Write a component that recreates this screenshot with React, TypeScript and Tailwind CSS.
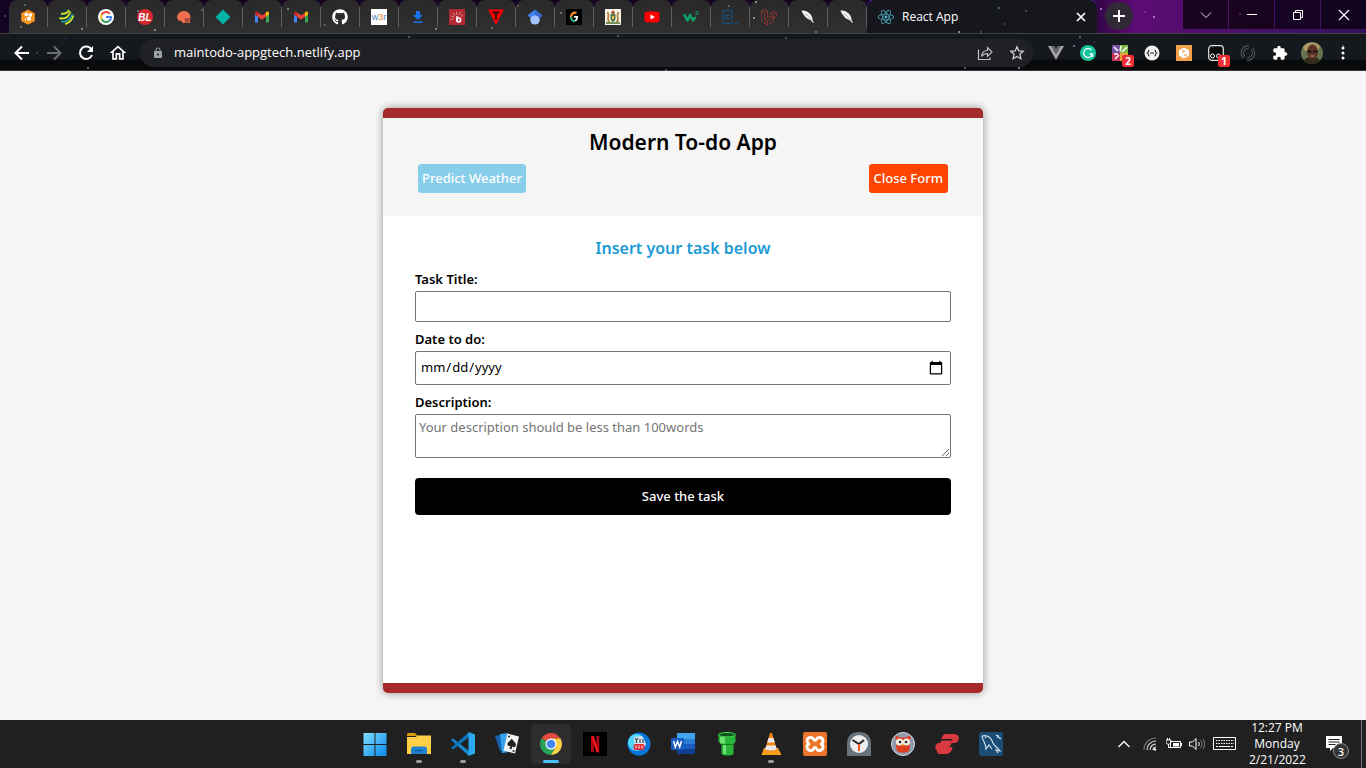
import React from "react";
import { FaGithub, FaLaravel, FaReact } from "react-icons/fa";
import { MdExtension, MdOutlineHome, MdLock } from "react-icons/md";

type IconProps = { children: React.ReactNode; box?: string; className?: string };

function Icon({ children, box = "0 0 16 16", className = "h-4 w-4" }: IconProps) {
  return (
    <svg viewBox={box} className={`${className} shrink-0`} fill="none" aria-hidden="true">
      {children}
    </svg>
  );
}

const gmail = (
  <Icon>
    <path d="M1 4v9.500h3V7z" fill="#4285f4" />
    <path d="M12 7v6.500h3V4z" fill="#34a853" />
    <path d="M4 3.500v4.300l4 3 4-3V3.500l-4 3z" fill="#ea4335" />
    <path d="M12 3.500v4.300l3-2.300V4.200c0-1.400-1.500-2.100-2.500-1.200z" fill="#fbbc04" />
    <path d="M4 3.500v4.300L1 5.500V4.200C1 2.800 2.500 2.100 3.500 3z" fill="#c5221f" />
  </Icon>
);

const feather = (
  <Icon>
    <path d="M1.500 1.500C5 1 9 3 11 6c1.200 2 1.700 4 1.500 5.500L10 11C6 9.500 3 5.500 1.500 1.500z" fill="#f4f4f4" />
    <path d="M5 4.500c2.500 1.500 4.500 4 6 7M4.500 8l.8-1.200" stroke="#777" strokeWidth=".5" />
    <path d="M11 10.500l2.500 3" stroke="#ddd" strokeWidth="1.200" />
  </Icon>
);

const tabs: { name: string; icon: React.ReactNode }[] = [
  {
    name: "Hive",
    icon: (
      <Icon>
        <path d="M8 .5l6.800 3.800v7.600L8 15.700 1.200 11.900V4.300z" fill="#f7921e" />
        <path d="M4.500 4.500l2-1 2 1v2l-2 1-2-1zM9 5l1.500-1L12 5v2l-1.500 1L9 7zM7 8.500l2-1 2 1v2.200L9 12l-2-1.300zM5 9l1 .5V12l-1-.5z" fill="#fff" />
      </Icon>
    ),
  },
  {
    name: "Globe",
    icon: (
      <Icon>
        <circle cx="8" cy="8" r="7.800" fill="#16323a" />
        <path d="M2 4.500c4 1 6 0 8-3.500M.5 9c5 1.500 9-1 11-6.500M6 15c4-1 7-4 8.500-8.500" stroke="#cddb2a" strokeWidth="2" />
        <path d="M2 12.500c5 1 9-2 11.500-7.500" stroke="#2da0a0" strokeWidth="1.600" />
      </Icon>
    ),
  },
  {
    name: "Google",
    icon: (
      <Icon>
        <circle cx="8" cy="8" r="8" fill="#fff" />
        <path d="M11.800 4.800A5 5 0 0 0 3.600 5.700" stroke="#ea4335" strokeWidth="2" />
        <path d="M3.600 5.700a5 5 0 0 0 0 4.600" stroke="#fbbc05" strokeWidth="2" />
        <path d="M3.600 10.300a5 5 0 0 0 7.600 1.600" stroke="#34a853" strokeWidth="2" />
        <path d="M11.200 11.900A5 5 0 0 0 13 8H8" stroke="#4285f4" strokeWidth="2" />
      </Icon>
    ),
  },
  {
    name: "BL",
    icon: (
      <Icon>
        <circle cx="8" cy="8" r="8" fill="#d7282f" />
        <text x="8" y="11.500" textAnchor="middle" fontSize="10" fontWeight="700" fontStyle="italic" fontFamily="Liberation Sans" fill="#fff">BL</text>
      </Icon>
    ),
  },
  {
    name: "Helmet",
    icon: (
      <Icon>
        <path d="M1 9c0-4 3-7 7-7s6.500 3 6.500 6.500l-.5 2v3.500H6.500l-1-2-3-.5z" fill="#f1704f" />
        <path d="M8.500 10h6M10 9v5M12 9v5M8.500 12h5" stroke="#7d3a2c" strokeWidth=".8" />
      </Icon>
    ),
  },
  { name: "Diamond", icon: <Icon><path d="M8 .5L15.500 8 8 15.500.5 8z" fill="#00b3a4" /></Icon> },
  { name: "Mail", icon: gmail },
  { name: "Mail", icon: gmail },
  { name: "GitHub", icon: <FaGithub className="h-4 w-4 text-white" /> },
  {
    name: "w3r",
    icon: (
      <Icon>
        <path d="M0 0h16v16H0z" fill="#fff" />
        <text x="8" y="11" textAnchor="middle" fontSize="9" fontFamily="Liberation Sans" fill="#4d82c4">w<tspan fill="#f58220">3</tspan>r</text>
      </Icon>
    ),
  },
  {
    name: "Downloads",
    icon: <Icon><path d="M6 2h4v4h3L8 11 3 6h3zM3.500 12.500h9V14h-9z" fill="#1a73e8" /></Icon>,
  },
  {
    name: "Bulb",
    icon: (
      <Icon>
        <path d="M0 0h16v16H0z" fill="#b52b35" />
        <path d="M1.500 10.500l3-.5M2 7l3 1.200M4 4l2 2.800M7.500 2.500l.3 3.500M11.500 3L10.200 6M14 6l-2.500 1.800" stroke="#e6a0a0" strokeWidth=".8" />
        <path d="M8 7v5.500" stroke="#fff" strokeWidth="1.500" />
        <circle cx="9.700" cy="11" r="1.900" stroke="#fff" strokeWidth="1.500" />
      </Icon>
    ),
  },
  {
    name: "Triangle",
    icon: <Icon><path d="M0 .5h16L8 16z" fill="#f00" /><path d="M4.500 3.500h7M8 3.500V11" stroke="#2b1010" strokeWidth="1.800" /></Icon>,
  },
  {
    name: "Scholar",
    icon: (
      <Icon>
        <circle cx="8" cy="10.800" r="4.800" fill="#a0c3ff" />
        <path d="M8 .5L.5 6.500 3.500 9a5 5 0 0 1 9 0l3-2.500z" fill="#4285f4" />
        <path d="M8 .5l7.500 6-3 2.500A5 5 0 0 0 8 6z" fill="#3569c9" />
      </Icon>
    ),
  },
  {
    name: "G",
    icon: (
      <Icon>
        <path d="M0 0h16v16H0z" fill="#000" />
        <path d="M10.500 4C7.500 3 5 5 5 8" stroke="#f68b2b" strokeWidth="2.200" />
        <path d="M5 8c0 3 2 4.500 4 4" stroke="#29b78b" strokeWidth="2.200" />
        <path d="M8 7.800h3.200c0 2-.7 3.200-2 3.900" stroke="#fff" strokeWidth="1.800" />
      </Icon>
    ),
  },
  {
    name: "Crest",
    icon: (
      <Icon>
        <path d="M0 0h16v16H0z" fill="#f7f5e9" />
        <path d="M5.500 5h5v5c0 2-2.500 3-2.500 3s-2.500-1-2.500-3z" fill="#54744a" />
        <path d="M8 1.500v3.500M6 3.500h4" stroke="#9c4a2c" strokeWidth="1.500" />
        <path d="M2.500 3l1 3-.5 5 1.500 2M13.500 3l-1 3 .5 5-1.500 2" stroke="#b3803c" strokeWidth="1.800" />
        <path d="M1 14h14" stroke="#779054" strokeWidth="2" />
        <path d="M7 7h2v3H7z" fill="#e2c84a" />
      </Icon>
    ),
  },
  {
    name: "YouTube",
    icon: <Icon><rect x=".5" y="2.500" width="15" height="11" rx="3" fill="#f00" /><path d="M6.500 5.500L11 8l-4.500 2.500z" fill="#fff" /></Icon>,
  },
  {
    name: "W3",
    icon: (
      <Icon>
        <path d="M1 5l3.500 6.500L7 6l3 5.500L12.500 8" stroke="#0d9f65" strokeWidth="2.600" strokeLinejoin="round" />
        <text x="12.300" y="6" fontSize="6" fontWeight="700" fontFamily="Liberation Sans" fill="#0d9f65">3</text>
      </Icon>
    ),
  },
  {
    name: "Code",
    icon: (
      <Icon>
        <rect x="1" y="1.500" width="9" height="13" rx="1" stroke="#174e78" strokeWidth="1.300" />
        <path d="M7.500 6H4v4h3.500M12 14.500h4" stroke="#174e78" strokeWidth="1.500" />
      </Icon>
    ),
  },
  { name: "Laravel", icon: <FaLaravel className="h-4 w-4 text-[#c73b32]" /> },
  { name: "Feather", icon: feather },
  { name: "Feather", icon: feather },
];

const stars: [number, number, string][] = [
  [24, 4, "#5ba1b4"], [4, 15, "#6846d8"], [20, 26, "#999"], [81, 28, "#ccc"], [137, 10, "#999"],
  [154, 29, "#ccc"], [201, 9, "#888"], [287, 8, "#bbb"], [324, 24, "#888"], [435, 28, "#bbb"],
  [491, 27, "#999"], [517, 5, "#a66"], [560, 12, "#aaa"], [728, 5, "#888"], [755, 1, "#ddd"],
  [753, 17, "#ddd"], [815, 31, "#aa8"], [998, 7, "#70a0cc"], [1025, 10, "#a65c6c"], [1004, 23, "#555"],
  [958, 31, "#ddd"], [980, 31, "#667"], [1079, 36, "#99c"], [1100, 8, "#f2c3ff"], [1153, 16, "#f4c6ff"],
  [1144, 11, "#a33bc0"], [1239, 13, "#74389c"], [65, 38, "#335"], [36, 52, "#464"], [87, 67, "#bb9"],
  [408, 36, "#889"], [617, 35, "#888"], [665, 69, "#999"], [785, 37, "#777"], [964, 67, "#88a"],
  [1018, 67, "#bcf"], [1073, 45, "#aaf"], [1093, 41, "#446"], [1342, 45, "#88c"], [1212, 46, "#246"],
];

function Starfield() {
  return (
    <svg className="pointer-events-none absolute left-0 top-0 h-full w-full" aria-hidden="true">
      {stars.map(([x, y, color]) => (
        <rect key={`${x}-${y}`} x={x} y={y} width="2" height="2" fill={color} opacity=".55" />
      ))}
    </svg>
  );
}

function TabStrip() {
  return (
    <div className="flex h-[34px] items-end border-b border-[#414143] bg-linear-to-r from-[#150322] from-78% via-[#5c0b74] via-83% to-[#35125f] pl-[9px]">
      <div className="flex h-full shrink-0 items-end">
        {tabs.map((tab, i) => (
          <button
            key={i}
            aria-label={tab.name}
            className="flex h-[33px] w-[39px] items-center justify-center rounded-t-lg bg-linear-to-b from-[#292929] to-[#303030]"
          >
            <span className="flex h-5 w-full items-center justify-center border-r border-[#606060]">{tab.icon}</span>
          </button>
        ))}
      </div>
      <div className="flex h-[34px] min-w-0 flex-[0_1_230px] items-center rounded-t-lg border-t border-[#542bc0] bg-[#15171d] pl-[11px] pr-[6px] text-white">
        <FaReact className="h-4 w-4 text-[#50b9d1]" />
        <span className="ml-2 flex-1 text-xs">React App</span>
        <button aria-label="Close tab" className="p-1">
          <Icon className="h-3 w-3" box="0 0 12 12"><path d="M2 2l8 8M10 2l-8 8" stroke="#fff" strokeWidth="1.700" /></Icon>
        </button>
      </div>
      <button aria-label="New tab" className="mb-[3px] ml-2 flex h-7 w-7 shrink-0 items-center justify-center rounded-full bg-[#302936]">
        <Icon><path d="M8 2v12M2 8h12" stroke="#fff" strokeWidth="2" /></Icon>
      </button>
      <div className="ml-auto flex h-full gap-px self-start">
        <button aria-label="Search tabs" className="flex h-[29px] w-[45px] items-center justify-center bg-[#19031f]">
          <Icon><path d="M3 5.500l5 5 5-5" stroke="#ddd" /></Icon>
        </button>
        <button aria-label="Minimize" className="flex h-[29px] w-[45px] items-center justify-center bg-[#19031f]">
          <Icon><path d="M3 7.500h10" stroke="#fff" /></Icon>
        </button>
        <button aria-label="Restore" className="flex h-[29px] w-[45px] items-center justify-center bg-[#170324]">
          <Icon><path d="M3.500 5.500h7v7h-7zM5.500 5V3.500h7v7H11" stroke="#fff" /></Icon>
        </button>
        <button aria-label="Close window" className="flex h-[29px] w-[45px] items-center justify-center bg-[#12031f]">
          <Icon><path d="M3 3l10 10M13 3L3 13" stroke="#fff" strokeWidth="1.200" /></Icon>
        </button>
      </div>
    </div>
  );
}

function CountBadge({ value }: { value: string }) {
  return (
    <span className="absolute -bottom-[6px] -right-[6px] flex h-3 w-3 items-center justify-center rounded-xs bg-[#ee3034] text-[10px] font-bold leading-none text-white">
      {value}
    </span>
  );
}

function Toolbar() {
  return (
    <div className="flex h-[37px] items-center border-b border-[#38353a] bg-linear-to-b from-[#15181c] from-70% to-[#090a0c] to-72% pl-3 pr-[15px] pt-px text-white">
      <div className="flex items-center gap-3">
        <button aria-label="Back"><Icon box="0 0 20 20" className="h-5 w-5"><path d="M17 10H4M10 3.500L3.500 10l6.500 6.500" stroke="#fff" strokeWidth="2" /></Icon></button>
        <button aria-label="Forward"><Icon box="0 0 20 20" className="h-5 w-5"><path d="M3 10h13M10 3.500l6.500 6.500-6.500 6.500" stroke="#6d6f72" strokeWidth="2" /></Icon></button>
        <button aria-label="Reload"><Icon box="0 0 20 20" className="h-5 w-5"><path d="M15.500 6.500A6.200 6.200 0 1 0 16 12" stroke="#fff" strokeWidth="2" /><path d="M17 3v6h-6z" fill="#fff" /></Icon></button>
        <button aria-label="Home"><MdOutlineHome className="h-5 w-5" /></button>
      </div>
      <div className="ml-3 flex h-7 min-w-0 flex-1 items-center rounded-full bg-[#202124] px-3">
        <MdLock className="h-3 w-3 shrink-0 text-[#9aa0a6]" />
        <input
          aria-label="Address"
          defaultValue="maintodo-appgtech.netlify.app"
          className="ml-[10px] min-w-0 flex-1 bg-transparent text-[13px] outline-none"
        />
        <button aria-label="Share">
          <Icon className="h-4 w-4"><path d="M1.500 4.500v10H13v-2" stroke="#c4c4c6" strokeWidth="1.200" /><path d="M4.500 11.500c.5-4.500 3-6 6-6V2.500L15 7l-4.500 4.500v-3c-2.500 0-4.500.8-6 3z" stroke="#c4c4c6" strokeWidth="1.100" /></Icon>
        </button>
        <button aria-label="Bookmark" className="ml-4 -mr-1">
          <Icon className="h-4 w-4"><path d="M8 1.800l1.800 4.100 4.400.4-3.300 3 1 4.400L8 11.400l-3.900 2.300 1-4.400-3.300-3 4.400-.4z" stroke="#d0d0d2" strokeWidth="1.300" /></Icon>
        </button>
      </div>
      <div className="ml-[15px] flex items-center gap-4">
        <button aria-label="Vue"><Icon><path d="M0 1h3.500L8 9l4.500-8H16L8 15z" fill="#a3a3a3" /><path d="M3.500 1h3L8 4l1.500-3h3L8 9z" fill="#696969" /></Icon></button>
        <button aria-label="Grammarly"><Icon><circle cx="8" cy="8" r="8" fill="#15c39a" /><path d="M11.500 5A4.500 4.500 0 1 0 12.500 9H9.500M12.500 9v3" stroke="#fff" strokeWidth="1.300" /></Icon></button>
        <button aria-label="Color tools, 2" className="relative">
          <Icon><path d="M0 0h8v8H0z" fill="#7450a1" /><path d="M8 0h8v8H8z" fill="#78b945" /><path d="M0 8h8v8H0z" fill="#c23459" /><path d="M8 8h8v8H8z" fill="#e0a334" /><path d="M2 2l4 4M9 1L8 6M15 2l-5 5M2 9h4M3 14l4-4" stroke="#fff" strokeWidth="1.500" /></Icon>
          <CountBadge value="2" />
        </button>
        <button aria-label="JSON"><Icon><circle cx="8" cy="8" r="7.500" fill="#f2f2f2" /><path d="M5.500 5c-1.500 0-.7 2.500-2 3 1.300.5.500 3 2 3M10.500 5c1.500 0 .7 2.500 2 3-1.300.5-.5 3-2 3M6 8h4" stroke="#222" strokeWidth="1.100" /></Icon></button>
        <button aria-label="Hive"><Icon><path d="M0 0h16v16H0z" fill="#f4a14c" /><path d="M8 2.500l5 2.700v5.600l-5 2.700-5-2.700V5.200z" fill="#fff" /><path d="M6 5.500l1.500-.8L9 5.500v1.800l-1.500.8L6 7.300zM8 9.500l1.500-.8 1.500.8v1.500l-1.500.8L8 11z" fill="#f6c48e" /></Icon></button>
        <button aria-label="Recorder, 1" className="relative">
          <Icon><rect x=".7" y=".7" width="14.600" height="14.600" rx="3" fill="#080808" stroke="#e8e8e8" strokeWidth="1.200" /><circle cx="4.500" cy="11" r="2" stroke="#fff" /><circle cx="10.500" cy="11" r="2" stroke="#fff" /></Icon>
          <CountBadge value="1" />
        </button>
        <button aria-label="Sync"><Icon><path d="M9 2a6 6 0 0 0-5 10M7 14a6 6 0 0 0 5-10" stroke="#66686a" strokeWidth="3.200" /><path d="M9 2a6 6 0 0 0-5 10M7 14a6 6 0 0 0 5-10" stroke="#15181c" strokeWidth="1.600" /></Icon></button>
        <button aria-label="Extensions"><MdExtension className="h-4 w-4" /></button>
        <button aria-label="Profile" className="-mx-[3px]">
          <Icon box="0 0 22 22" className="h-[22px] w-[22px]">
            <circle cx="11" cy="11" r="11" fill="#65734f" />
            <path d="M2 5a11 11 0 0 1 17-1l-2 5H4z" fill="#a89a62" />
            <path d="M3 19c1-3 4-4 8-4s7 1 8 4a11 11 0 0 1-16 0z" fill="#2f2c1c" />
            <ellipse cx="11.500" cy="10" rx="5.500" ry="7.500" fill="#5a3324" />
            <path d="M6.500 8.500h4v2h-4zM12 8.500h4.500v2H12z" fill="#171212" />
            <path d="M9.500 14h4" stroke="#c98f75" />
          </Icon>
        </button>
        <button aria-label="Menu" className="-ml-px"><Icon><circle cx="8" cy="3" r="1.500" fill="#fff" /><circle cx="8" cy="8" r="1.500" fill="#fff" /><circle cx="8" cy="13" r="1.500" fill="#fff" /></Icon></button>
      </div>
    </div>
  );
}

function TodoCard() {
  const field = "w-full rounded-xs border border-[#767676] bg-white font-normal";
  return (
    <section className="flex min-h-[585px] w-full max-w-[600px] flex-col rounded-[5px] border-y-[10px] border-[#a52a2a] bg-white font-['Noto_Sans','Open_Sans',sans-serif] text-black shadow-[0_0_8px_rgba(0,0,0,0.4)]">
      <header className="bg-[#f5f5f5] px-[35px] pb-[23px] pt-2">
        <h1 className="text-center text-[21px] font-semibold leading-8">Modern To-do App</h1>
        <div className="mt-[6px] flex justify-between text-[13px] font-medium text-white">
          <button className="h-[29px] rounded-[3px] bg-[#87ceeb] px-1">Predict Weather</button>
          <button className="h-[29px] rounded-[3px] bg-[#ff4500] px-[5px]">Close Form</button>
        </div>
      </header>
      <form className="flex flex-col px-8 pt-5 text-[13px]" onSubmit={(e) => e.preventDefault()}>
        <h2 className="text-center text-base font-semibold leading-6 text-[#1c9ad6]">Insert your task below</h2>
        <label htmlFor="title" className="mt-[9px] font-semibold leading-5">Task Title:</label>
        <input id="title" type="text" className={`${field} mt-[2px] h-[31px] px-1`} />
        <label htmlFor="date" className="mt-[7px] font-semibold leading-5">Date to do:</label>
        <input
          id="date"
          type="date"
          className={`${field} mt-[2px] h-[34px] px-1 [&::-webkit-calendar-picker-indicator]:h-4 [&::-webkit-calendar-picker-indicator]:w-4 [&::-webkit-calendar-picker-indicator]:bg-contain [&::-webkit-calendar-picker-indicator]:p-[2px]`}
        />
        <label htmlFor="description" className="mt-[7px] font-semibold leading-5">Description:</label>
        <textarea
          id="description"
          placeholder="Your description should be less than 100words"
          className={`${field} mt-[2px] h-11 px-[3px] py-[2px] leading-5 placeholder:text-[#757575]`}
        />
        <button type="submit" className="mt-5 h-[37px] rounded-[4px] bg-black font-medium text-white">Save the task</button>
      </form>
    </section>
  );
}

const box24 = "0 0 24 24";
const size24 = "h-6 w-6";

const apps: { name: string; running?: boolean; active?: boolean; icon: React.ReactNode }[] = [
  {
    name: "Start",
    icon: (
      <Icon box={box24} className={size24}>
        <defs><linearGradient id="win" x1="0" y1="0" x2="1" y2="1"><stop stopColor="#7ee0ff" /><stop offset="1" stopColor="#0a87ec" /></linearGradient></defs>
        <path d="M.5 1H11.500v11H.5zM12.500 1h11v11h-11zM.5 13h11v11H.5zM12.500 13h11v11h-11z" fill="url(#win)" />
      </Icon>
    ),
  },
  {
    name: "File Explorer",
    running: true,
    icon: (
      <Icon box={box24} className={size24}>
        <path d="M0 2.500C0 1.500.5 1 1.500 1H8l2.500 3H0z" fill="#d99b0c" />
        <path d="M0 5h8.500l2-1.500H24V22H0z" fill="#ffcf48" />
        <path d="M4 22v-5c0-1.500 1-2.500 2.500-2.500h11c1.500 0 2.500 1 2.500 2.500v5z" fill="#1f83d2" />
        <path d="M8 18.500h8" stroke="#0c5ba5" strokeWidth="1.500" />
      </Icon>
    ),
  },
  {
    name: "Visual Studio Code",
    running: true,
    icon: (
      <Icon box={box24} className={size24}>
        <path d="M0 8l2-1.500L18 19v5z" fill="#1688d1" />
        <path d="M0 16l2 1.500L18 5V0z" fill="#0b74bd" />
        <path d="M17.500 0L24 2.500v19L17.500 24z" fill="#2aa8f2" />
      </Icon>
    ),
  },
  {
    name: "Solitaire",
    icon: (
      <Icon box={box24} className={size24}>
        <path d="M0 4l8-2 4 16-7 1z" fill="#1360ad" /><path d="M5 2l8-1 1 19-7 1z" fill="#36a1ec" />
        <path d="M12.500 1.500L24 4.500l-4 17L8.500 18.500z" fill="#f4f4f4" />
        <path d="M16.800 6.500c1.500 3 5 4.500 4 7.300-.8 2-3 1.700-3.800.4l-.3 3-2.500-.6 1.300-2.800c-1.300.8-3.200 0-3.100-1.900.1-2.200 3.200-2.900 4.400-5.400z" fill="#202225" />
        <circle cx="14" cy="4.500" r="1" fill="#222" /><circle cx="18.500" cy="19" r="1" fill="#222" />
      </Icon>
    ),
  },
  {
    name: "Chrome",
    active: true,
    icon: (
      <Icon box={box24} className={size24}>
        <path d="M12 12L2.500 6.500A11 11 0 0 1 21.500 6.500H12z" fill="#e24b3f" />
        <path d="M12 12L2.500 6.500A11 11 0 0 0 12 23l4.800-8.300z" fill="#29a35a" />
        <path d="M12 6.500h9.500A11 11 0 0 1 12 23l4.800-8.300z" fill="#fdd04a" />
        <circle cx="12" cy="12" r="5.500" fill="#fff" /><circle cx="12" cy="12" r="4.300" fill="#4285f4" />
      </Icon>
    ),
  },
  {
    name: "Netflix",
    icon: <Icon box={box24} className={size24}><path d="M0 0h24v24H0z" fill="#000" /><path d="M8 4h2.800v16L8 20.500zM13.500 4h2.700v16.500l-2.700-.5z" fill="#b20710" /><path d="M8 4h2.800l5.400 16.500-2.800-.5z" fill="#f01420" /></Icon>,
  },
  {
    name: "Video downloader",
    icon: (
      <Icon box={box24} className={size24}>
        <circle cx="12" cy="12" r="11.500" fill="#0876d8" /><circle cx="9.500" cy="10.500" r="8.500" fill="#4fd6fb" />
        <path d="M7 5l8-1 4 8-3 6H8z" fill="#d9e4ec" />
        <rect x="6.500" y="12" width="11" height="6" rx="2" fill="#df2635" />
        <path d="M8 6l1.500 2L11 6M9.500 8v3M13 7v4M16 7v4" stroke="#394653" strokeWidth="1.200" />
        <path d="M9 13.500v3M12 13.500v3M15 13.500v3" stroke="#fff" />
      </Icon>
    ),
  },
  {
    name: "Word",
    icon: (
      <Icon box={box24} className={size24}>
        <path d="M6 1h18v6H6z" fill="#41a5ee" /><path d="M6 7h18v5H6z" fill="#2b7cd3" /><path d="M6 12h18v5H6z" fill="#185abd" /><path d="M6 17h18v5H6z" fill="#103f91" />
        <rect y="6" width="13" height="12" rx="1" fill="#185abd" />
        <path d="M2.500 9l1.800 6L6.500 9.500 8.700 15l1.800-6" stroke="#fff" strokeWidth="1.500" />
      </Icon>
    ),
  },
  {
    name: "Pipe",
    icon: <Icon box={box24} className={size24}><path d="M3.500 2h17v8l-2 2v10c-3 2-9 2-12 0V12l-3-2z" fill="#28b53a" /><path d="M5 5h5v6.500H5zM8 13h3v9H8z" fill="#6ee070" /><path d="M6 12.500h13" stroke="#157a22" /><ellipse cx="12" cy="2.700" rx="8.500" ry="2.200" fill="#11551c" stroke="#43d754" /></Icon>,
  },
  {
    name: "VLC",
    running: true,
    icon: (
      <Icon box={box24} className={size24}>
        <path d="M5 16h14l3.500 7h-20z" fill="#f7a01c" /><path d="M11 1h2l5 17c-2 2-10 2-12 0z" fill="#f18419" />
        <path d="M9.500 6h5l1.300 4.500H8.200zM7.300 13.500h9.400l1 3.500c-2 2-9 2-11.500 0z" fill="#e9e9e9" />
      </Icon>
    ),
  },
  {
    name: "XAMPP",
    icon: <Icon box={box24} className={size24}><rect width="24" height="24" rx="2" fill="#ed752b" /><path d="M8 5.500c-5.500 0-4.500 6.500-1 6.500-4.500 0-4 6.500 1 6.500 3 0 2-3 4-3s1 3 4 3c5 0 5.500-6.500 1-6.500 4.500 0 4-6.500-1-6.500-3 0-2 3-4 3s-1-3-4-3z" stroke="#fff" strokeWidth="2.800" /></Icon>,
  },
  {
    name: "Clock",
    icon: (
      <Icon box={box24} className={size24}>
        <path d="M0 12C0 4 4 0 12 0s12 4 12 12v12H0z" fill="#66727c" /><circle cx="12" cy="12" r="9" fill="#ececec" />
        <path d="M5.500 8l6.500 4 5-4" stroke="#252525" strokeWidth="2" /><path d="M12 12v7" stroke="#f15a24" strokeWidth="2" />
      </Icon>
    ),
  },
  {
    name: "Owl",
    icon: (
      <Icon box={box24} className={size24}>
        <circle cx="12" cy="12" r="11.500" fill="#8e9bae" stroke="#d5d7dc" /><path d="M4.500 3.500l5 2h5l5-2-1 15c-3 3-10 3-13 0z" fill="#dd3e20" />
        <circle cx="8.500" cy="10" r="3.600" fill="#f5f0e5" /><circle cx="15.500" cy="10" r="3.600" fill="#f5f0e5" />
        <circle cx="9" cy="10" r="1.300" fill="#26282c" /><circle cx="15" cy="10" r="1.300" fill="#26282c" /><path d="M11 12h2l-1 3z" fill="#f6be35" />
      </Icon>
    ),
  },
  {
    name: "Express VPN",
    icon: <Icon box={box24} className={size24}><path d="M11 2h8c4 0 5.500 3 4.500 6-.7 2-2 3-4 3H5l1.500-2.500H17L17.500 7H6.500C7 4 8.500 2 11 2zM3 11h13.500c-.5 2.500-2 4-4.500 4h5.500c-.5 4-2.500 7-6 7H5c-2.500 0-3.500-2-3-4H1c-1.500-3-.5-6 2-7z" fill="#da3940" /></Icon>,
  },
  {
    name: "MySQL Workbench",
    icon: <Icon box={box24} className={size24}><rect width="24" height="24" rx="3" fill="#1b4d75" /><path d="M3 4c6-2 10 3 11 7 1 3 4 4 7 8l-4-1 2 3M3 4c1 6 4 7 4 13l3-4 3 4M17 3l5 4M19 3v3M6 5l1 1" stroke="#d0e0ea" strokeWidth="1.200" /></Icon>,
  },
];

function Taskbar() {
  return (
    <footer className="grid h-12 grid-cols-[1fr_auto_1fr] bg-[#202020] text-white">
      <nav aria-label="Apps" className="col-start-2 flex">
        {apps.map((app) => (
          <div key={app.name} className="flex w-11 items-center justify-center">
            <button
              aria-label={app.name}
              className={`flex h-10 w-10 flex-col items-center rounded-sm pt-2 ${app.active ? "bg-[#2e2e2e]" : ""}`}
            >
              {app.icon}
              {app.active && <span className="mt-1 h-[3px] w-4 rounded-full bg-[#4cc2ff]" />}
              {app.running && <span className="mt-1 h-[3px] w-[6px] rounded-full bg-[#9b9b9b]" />}
            </button>
          </div>
        ))}
      </nav>
      <div className="flex items-center justify-end">
        <button aria-label="Hidden icons" className="mr-[10px]"><Icon><path d="M2.500 11L8 5.500l5.500 5.500" stroke="#fff" strokeWidth="1.300" /></Icon></button>
        <Icon className="mr-2 h-4 w-4"><path d="M2 14A12 12 0 0 1 14 2" stroke="#777" strokeWidth="1.200" /><path d="M5 14a9 9 0 0 1 9-9M8 14a6 6 0 0 1 6-6M11 14a3 3 0 0 1 3-3" stroke="#ddd" strokeWidth="1.200" /><circle cx="13" cy="13.500" r="1.200" fill="#fff" /></Icon>
        <Icon className="mr-[7px] h-4 w-4"><path d="M4.500 5.500h10v6h-10z" stroke="#fff" /><path d="M7 7h6v3.500H7zM14.500 7H16v3h-1.500z" fill="#fff" /><path d="M0 4h5v2c0 3-5 3-5 0zM1.500 2v2M3.500 2v2M2.500 8v3.500H5" stroke="#fff" /></Icon>
        <Icon className="mr-2 h-4 w-4"><path d="M.5 6h3L7 2.500v11L3.500 10h-3z" stroke="#fff" /><path d="M9.500 6c1 1 1 3 0 4" stroke="#fff" /><path d="M11.500 4.500c2 2 2 5 0 7M13.500 3c3 3 3 7 0 10" stroke="#888" /></Icon>
        <Icon box="0 0 24 14" className="mr-3 h-[14px] w-6"><path d="M.5.500h22v12H.5z" stroke="#fff" /><path d="M3 3.500h18M3 6.500h18" stroke="#fff" strokeDasharray="1.500 1" /><path d="M3 9.500h2M6 9.500h11M18 9.500h2" stroke="#fff" /></Icon>
        <time className="w-14 whitespace-nowrap text-center text-xs leading-4">12:27 PM<br />Monday<br />2/21/2022</time>
        <button aria-label="Notifications, 3" className="relative ml-5 mr-3">
          <Icon box="0 0 24 24" className="h-6 w-6"><path d="M1 4h16v12H8l-3 3v-3H1z" fill="#fff" /><path d="M3.500 7.500h11M3.500 10h11M3.500 12.500h7" stroke="#222" /></Icon>
          <span className="absolute -bottom-[3px] right-0 flex h-4 w-4 items-center justify-center rounded-full border border-[#8c8c8c] bg-[#333] text-[11px] font-semibold leading-none">3</span>
        </button>
        <span className="mr-1 h-full w-px bg-[#777]" />
      </div>
    </footer>
  );
}

export default function App() {
  return (
    <div className="flex min-h-screen flex-col bg-[#f5f5f5] font-['Open_Sans','Noto_Sans',sans-serif]">
      <div className="relative">
        <TabStrip />
        <Toolbar />
        <Starfield />
      </div>
      <main className="flex flex-1 items-start justify-center pb-[27px] pt-[37px]">
        <TodoCard />
      </main>
      <Taskbar />
    </div>
  );
}
